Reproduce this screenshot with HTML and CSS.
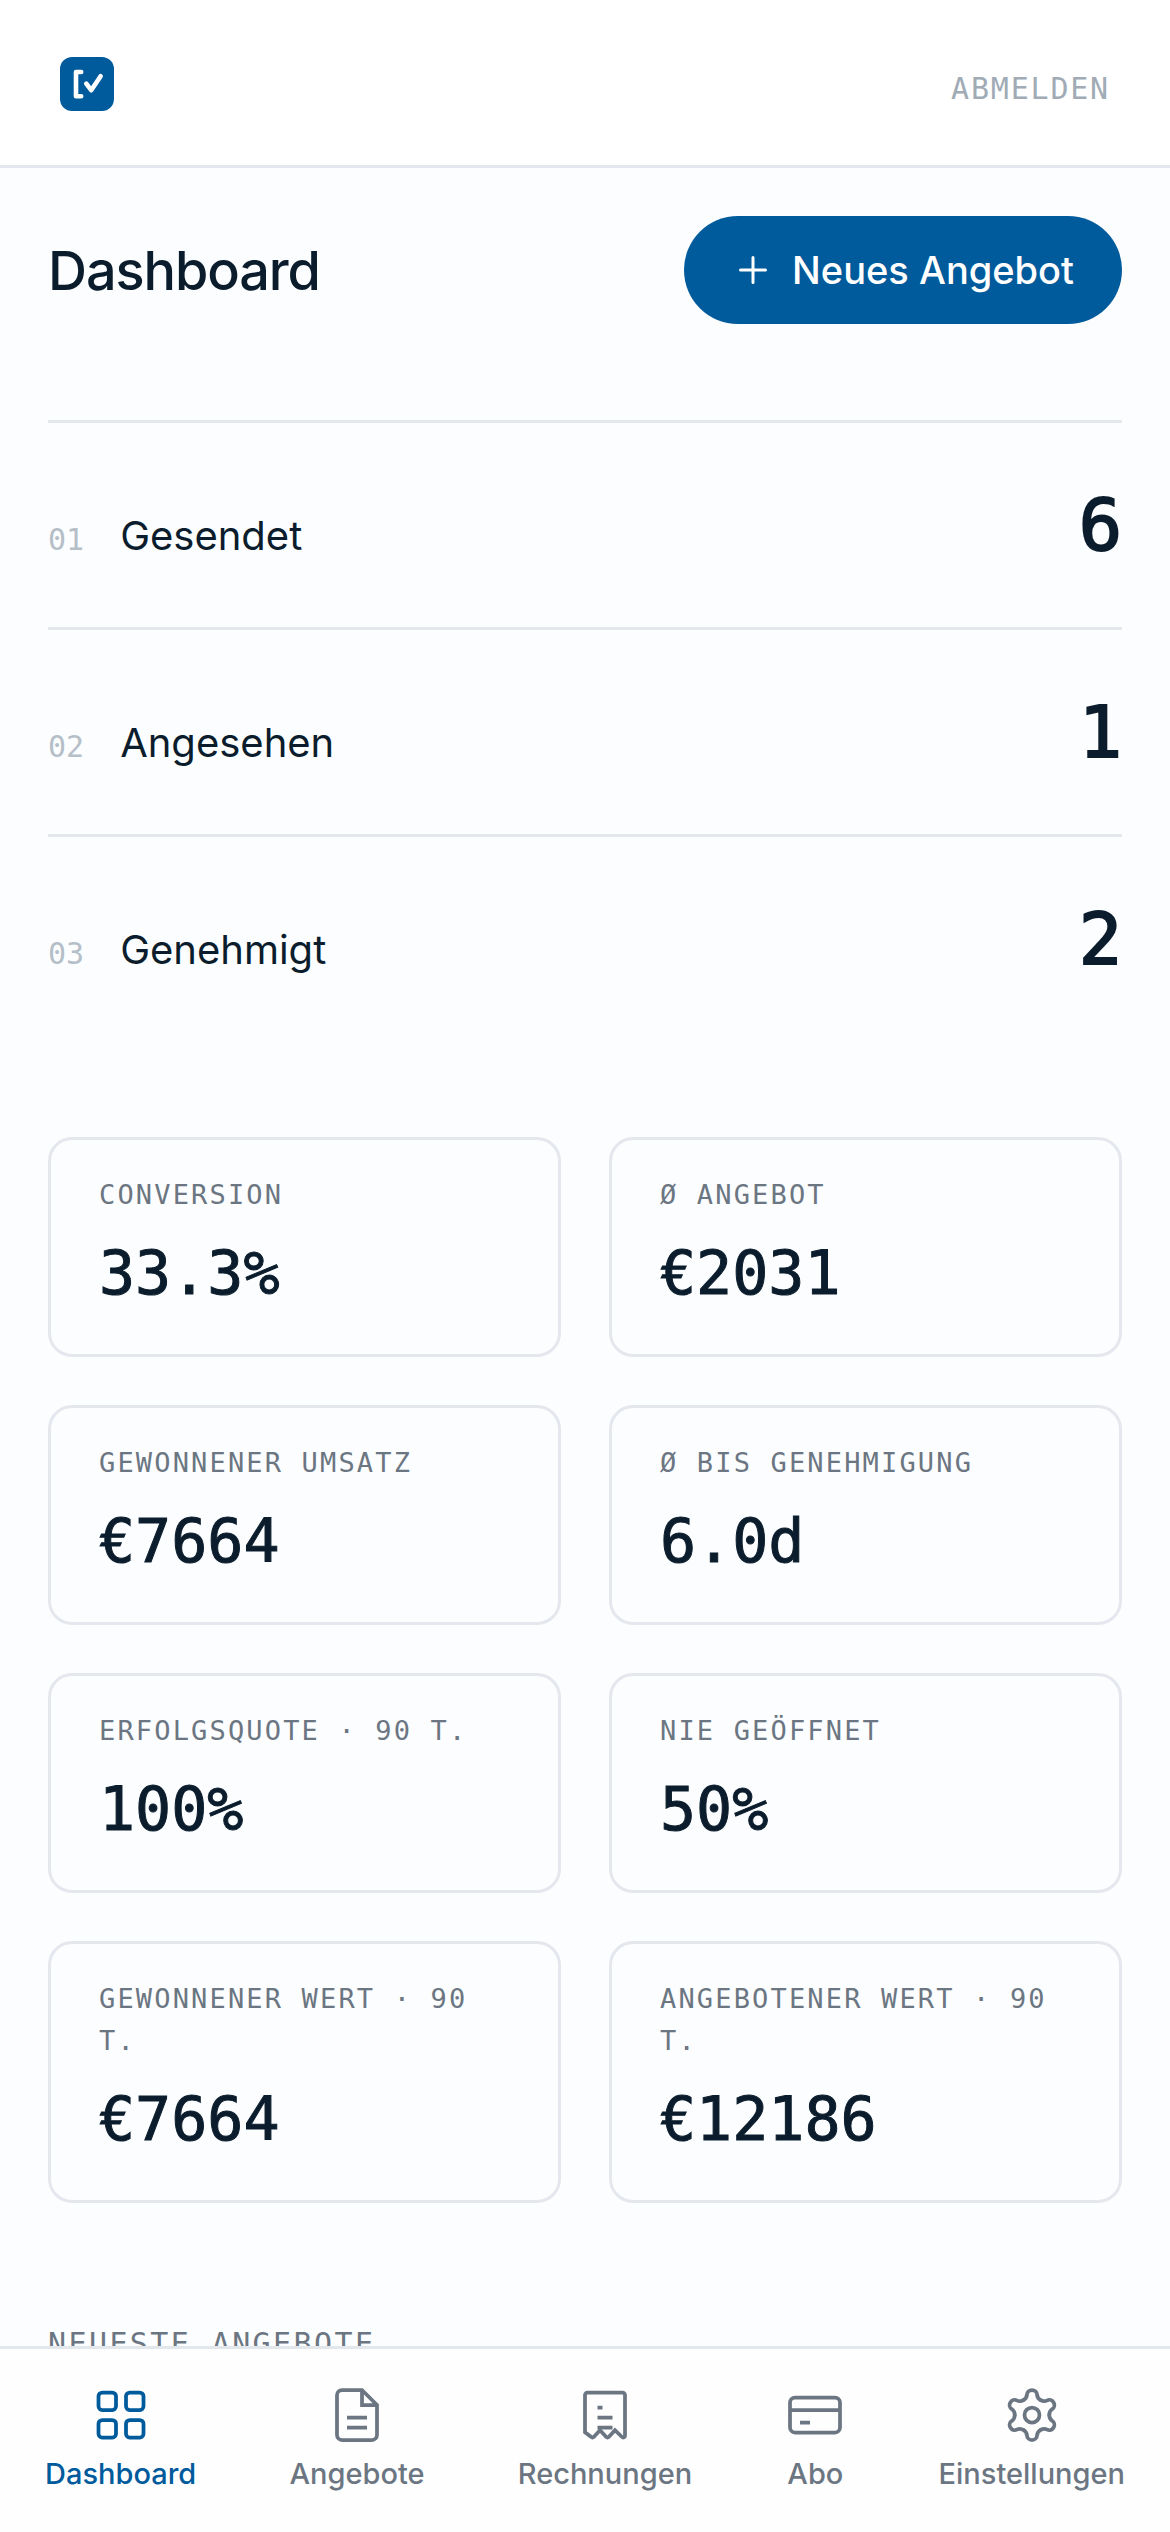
FILE: index.html
```html
<!DOCTYPE html>
<html lang="de">
<head>
	<meta charset="utf-8">
	<meta name="viewport" content="width=device-width, initial-scale=1">
	<title>Dashboard</title>
	<link rel="stylesheet" href="styles.css">
</head>
<body>
	<header class="topbar">
		<a class="logo" href="#" aria-label="Startseite">
			<svg viewBox="0 0 54 54">
				<rect width="54" height="54" rx="12" fill="#005b9c"/>
				<path d="M21.2 15H16v24.3h5.2M26.3 26.6l4.9 6.6 9.4-14" fill="none" stroke="#fff" stroke-width="4.6" stroke-linecap="round" stroke-linejoin="round"/>
			</svg>
		</a>
		<button class="logout" type="button">ABMELDEN</button>
	</header>

	<main class="content">
		<div class="page-head">
			<h1>Dashboard</h1>
			<button class="new-btn" type="button">
				<svg viewBox="0 0 42 42"><path d="M21 8.5v25M8.5 21h25"/></svg>
				Neues Angebot
			</button>
		</div>

		<ul class="stats">
			<li><span class="no">01</span><span class="name">Gesendet</span><span class="count">6</span></li>
			<li><span class="no">02</span><span class="name">Angesehen</span><span class="count">1</span></li>
			<li><span class="no">03</span><span class="name">Genehmigt</span><span class="count">2</span></li>
		</ul>

		<dl class="cards">
			<div class="card"><dt>CONVERSION</dt><dd>33.3%</dd></div>
			<div class="card"><dt>Ø ANGEBOT</dt><dd>€2031</dd></div>
			<div class="card"><dt>GEWONNENER UMSATZ</dt><dd>€7664</dd></div>
			<div class="card"><dt>Ø BIS GENEHMIGUNG</dt><dd>6.0d</dd></div>
			<div class="card"><dt>ERFOLGSQUOTE · 90 T.</dt><dd>100%</dd></div>
			<div class="card"><dt>NIE GEÖFFNET</dt><dd>50%</dd></div>
			<div class="card"><dt>GEWONNENER WERT · 90 T.</dt><dd>€7664</dd></div>
			<div class="card"><dt>ANGEBOTENER WERT · 90 T.</dt><dd>€12186</dd></div>
		</dl>

		<h2 class="section-title">NEUESTE ANGEBOTE</h2>
	</main>

	<nav class="tabbar">
		<a class="tab on" href="#">
			<svg viewBox="0 0 24 24">
				<rect x="3" y="3" width="7" height="7" rx="1.5"/>
				<rect x="14" y="3" width="7" height="7" rx="1.5"/>
				<rect x="3" y="14" width="7" height="7" rx="1.5"/>
				<rect x="14" y="14" width="7" height="7" rx="1.5"/>
			</svg>
			Dashboard
		</a>
		<a class="tab" href="#">
			<svg viewBox="0 0 24 24">
				<path d="M14 2H6a2 2 0 0 0-2 2v16a2 2 0 0 0 2 2h12a2 2 0 0 0 2-2V8zv6h6M8 13h8M8 17h8"/>
			</svg>
			Angebote
		</a>
		<a class="tab" href="#">
			<svg viewBox="0 0 24 24">
				<path d="M4 18.9V4a1 1 0 0 1 1-1h14a1 1 0 0 1 1 1v16.3a.7.7 0 0 1-1.2.5L16 18.1l-2.5 2.7a.7.7 0 0 1-1 0L10 18.1l-2.5 2.7a.7.7 0 0 1-1 0z"/>
				<path d="M9 9h2M9 13h6M9 17h6"/>
			</svg>
			Rechnungen
		</a>
		<a class="tab" href="#">
			<svg viewBox="0 0 24 24">
				<rect x="2" y="5" width="20" height="14" rx="2"/>
				<path d="M2 10h20M6 15h4"/>
			</svg>
			Abo
		</a>
		<a class="tab" href="#">
			<svg viewBox="-12 -12 24 24">
				<circle r="3"/>
				<g stroke-linecap="round">
					<path id="tooth" d="M-3.45-5.98C-2.5-6.5-2.1-7-2-8.2A2 1.8 0 0 1 2-8.2C2.1-7 2.5-6.5 3.45-5.98"/>
					<use href="#tooth" transform="rotate(60)"/>
					<use href="#tooth" transform="rotate(120)"/>
					<use href="#tooth" transform="rotate(180)"/>
					<use href="#tooth" transform="rotate(240)"/>
					<use href="#tooth" transform="rotate(300)"/>
				</g>
			</svg>
			Einstellungen
		</a>
	</nav>
</body>
</html>
```
FILE: styles.css
```css
*{margin:0;padding:0;box-sizing:border-box;}
body{
	background:#fcfdfe;
	color:#0b1d2d;
	font-family:Inter,"Liberation Sans",sans-serif;
}
button{
	border:0;
	background:none;
	cursor:pointer;
}
a{
	text-decoration:none;
}
svg{
	display:block;
}
.logout,
.no,
.count,
.card,
.section-title{
	font-family:"DejaVu Sans Mono",monospace;
	font-weight:400;
}

/* header */
.topbar{
	display:flex;
	justify-content:space-between;
	align-items:center;
	padding:57px 60px 54px;
	background:#fff;
	border-bottom:3px solid #e5e7ee;
}
.logo svg{
	width:54px;
	height:54px;
}
.logout{
	color:#a0abb5;
	font-size:30px;
	line-height:42px;
	letter-spacing:0.06em;
	padding-top:9px;
}

/* content */
.content{
	padding:48px 48px 0;
}
.page-head{
	display:flex;
	justify-content:space-between;
	align-items:center;
	margin-bottom:96px;
}
h1{
	font-size:54px;
	font-weight:500;
	letter-spacing:-0.02em;
}
.new-btn{
	display:flex;
	align-items:center;
	gap:18px;
	padding:0 48px;
	border-radius:54px;
	background:#005b9c;
	color:#fff;
	font-family:inherit;
	font-size:38px;
	font-weight:500;
	line-height:108px;
}
.new-btn svg{
	width:42px;
	height:42px;
	fill:none;
	stroke:#fff;
	stroke-width:3;
	stroke-linecap:round;
}
.stats{
	list-style:none;
	margin-bottom:96px;
}
.stats li{
	display:flex;
	align-items:baseline;
	gap:36px;
	padding:48px 0;
	border-top:3px solid #e5e7ee;
	line-height:48px;
}
.no{
	font-size:30px;
	color:#b5bfc8;
}
.name{
	flex:1;
	font-size:40px;
}
.count{
	font-size:72px;
	line-height:108px;
	-webkit-text-stroke:2px;
}
.cards{
	display:grid;
	grid-template-columns:1fr 1fr;
	gap:48px;
	margin-bottom:120px;
}
.card{
	padding:34px 48px 36px;
	border:3px solid #e5e7ee;
	border-radius:24px;
}
.card dt{
	margin-bottom:12px;
	color:#6b7682;
	font-size:27px;
	line-height:42px;
	letter-spacing:0.08em;
}
.card dd{
	font-size:60px;
	line-height:90px;
	-webkit-text-stroke:1px;
}
.section-title{
	color:#6b7682;
	font-size:30px;
	line-height:42px;
	letter-spacing:0.08em;
}

/* bottom tabs */
.tabbar{
	position:fixed;
	left:0;
	right:0;
	bottom:0;
	display:flex;
	justify-content:space-between;
	padding:36px 45px;
	background:#fefefe;
	border-top:3px solid #e2e7eb;
}
.tab{
	display:flex;
	flex-direction:column;
	align-items:center;
	gap:6px;
	color:#6b7682;
	font-size:29px;
	font-weight:500;
	line-height:45px;
}
.tab svg{
	width:60px;
	height:60px;
	fill:none;
	stroke:currentColor;
	stroke-width:1.5;
}
.tab.on{
	color:#005b9c;
}
```
